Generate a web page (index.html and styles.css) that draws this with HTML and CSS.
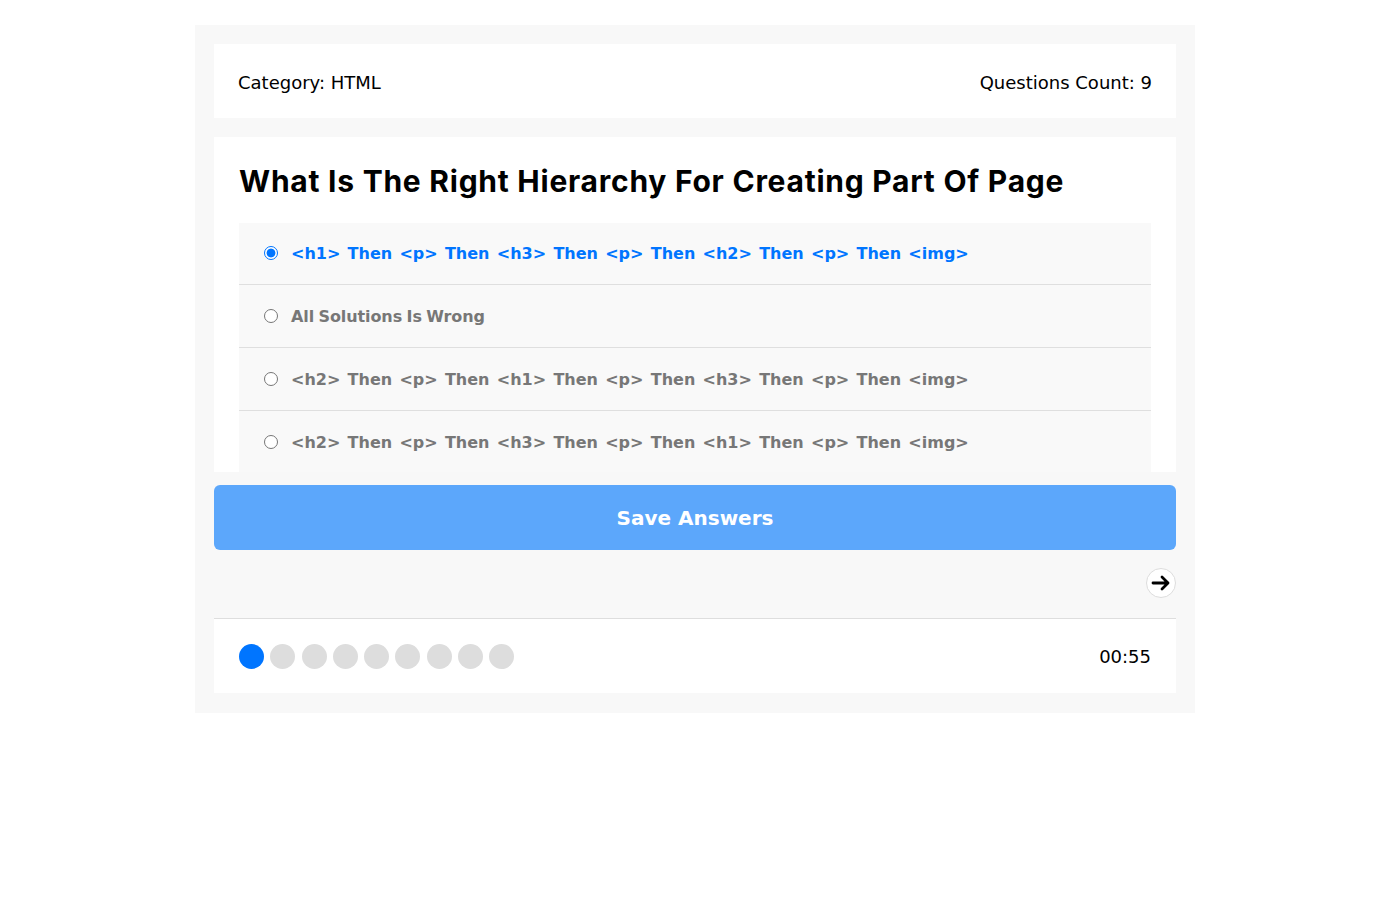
FILE: index.html
```html
<!DOCTYPE html>
<html>
<head>
<meta charset="utf-8">
<link rel="stylesheet" href="styles.css">
</head>
<body>
<div class="quiz">
  <div class="info">
    <div class="category">Category: <span>HTML</span></div>
    <div class="count">Questions Count: <span>9</span></div>
  </div>
  <div class="quiz-area">
    <h2 class="question">What Is The Right Hierarchy For Creating Part Of Page</h2>
    <div class="answers">
      <label class="answer checked"><span class="radio on"></span><span class="txt">&lt;h1&gt; Then &lt;p&gt; Then &lt;h3&gt; Then &lt;p&gt; Then &lt;h2&gt; Then &lt;p&gt; Then &lt;img&gt;</span></label>
      <label class="answer"><span class="radio"></span><span class="txt plain">All Solutions Is Wrong</span></label>
      <label class="answer"><span class="radio"></span><span class="txt">&lt;h2&gt; Then &lt;p&gt; Then &lt;h1&gt; Then &lt;p&gt; Then &lt;h3&gt; Then &lt;p&gt; Then &lt;img&gt;</span></label>
      <label class="answer"><span class="radio"></span><span class="txt">&lt;h2&gt; Then &lt;p&gt; Then &lt;h3&gt; Then &lt;p&gt; Then &lt;h1&gt; Then &lt;p&gt; Then &lt;img&gt;</span></label>
    </div>
  </div>
  <button class="submit">Save Answers</button>
  <div class="nav">
    <span class="next"><svg width="20" height="20" viewBox="0 0 20 20"><path d="M2 10H17M11 4L17 10L11 16" fill="none" stroke="#000" stroke-width="2.8" stroke-linecap="round" stroke-linejoin="round"/></svg></span>
  </div>
  <div class="bullets">
    <div class="spans">
      <span class="on"></span><span></span><span></span><span></span><span></span><span></span><span></span><span></span><span></span>
    </div>
    <div class="countdown">00:55</div>
  </div>
</div>
</body>
</html>
```
FILE: styles.css
```css
body {
  margin: 0;
  font-family: "DejaVu Sans", Tahoma, sans-serif;
  background: #fff;
}
.quiz {
  width: 1000px;
  box-sizing: border-box;
  margin: 25px auto 0;
  background: #f8f8f8;
  padding: 19px 19px 20px;
}
.info {
  background: #fff;
  height: 74px;
  padding: 3px 24px 0;
  box-sizing: border-box;
  display: flex;
  justify-content: space-between;
  align-items: center;
  font-size: 18px;
  color: #000;
}
.quiz-area {
  background: #fff;
  margin-top: 19px;
  height: 335px;
  overflow: hidden;
  padding: 0 25px;
  box-sizing: border-box;
}
.question {
  margin: 0;
  padding-top: 26px;
  height: 60px;
  font-family: Inter, "Open Sans", sans-serif;
  font-weight: 700;
  font-size: 30px;
  line-height: 36px;
  letter-spacing: 0.75px;
}
.answers {
  background: #f9f9f9;
}
.answer {
  display: flex;
  align-items: center;
  height: 62px;
  padding-left: 25px;
  padding-bottom: 1px;
  box-sizing: border-box;
  border-bottom: 1px solid #dfdfdf;
  font-weight: 700;
  font-size: 16px;
  color: #777;
  margin-bottom: 1px;
}
.answer .txt { word-spacing: 1.7px; }
.answer .txt.plain { word-spacing: -1px; letter-spacing: -0.1px; }
.answer.checked { color: #0075ff; }
.radio {
  width: 12px;
  height: 12px;
  border: 1px solid #767676;
  border-radius: 50%;
  background: #fff;
  margin-right: 13px;
  flex: none;
  box-sizing: content-box;
}
.radio.on {
  border: 1px solid #0075ff;
  background: radial-gradient(circle, #0075ff 0 4px, #fff 4.8px);
}
.submit {
  display: block;
  width: 100%;
  height: 65px;
  margin-top: 13px;
  border: none;
  border-radius: 6px;
  background: #5ca7fb;
  color: #fff;
  font-family: "DejaVu Sans", Tahoma, sans-serif;
  font-weight: 700;
  font-size: 20px;
  padding: 0;
}
.nav {
  height: 68px;
  display: flex;
  justify-content: flex-end;
  align-items: center;
  border-bottom: 1px solid #dedede;
}
.next {
  width: 28px;
  height: 28px;
  border: 1px solid #ddd;
  border-radius: 50%;
  background: #fff;
  display: flex;
  align-items: center;
  justify-content: center;
  margin-top: -2px;
}
.bullets {
  background: #fff;
  height: 74px;
  padding: 0 25px;
  display: flex;
  justify-content: space-between;
  align-items: center;
}
.spans {
  display: flex;
  gap: 6.25px;
}
.spans span {
  width: 25px;
  height: 25px;
  border-radius: 50%;
  background: #ddd;
}
.spans span.on { background: #0075ff; }
.countdown {
  font-size: 18px;
}
```
